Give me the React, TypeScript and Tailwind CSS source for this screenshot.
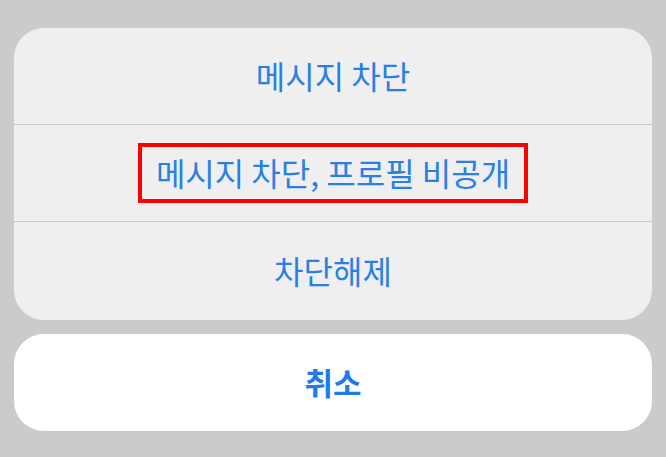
import React from "react";

const rows = ["메시지 차단", "메시지 차단, 프로필 비공개", "차단해제"];

export default function App() {
  return (
    <div
      className="w-[666px] h-[457px] bg-[#cbcbcb] px-[14px] pt-[28px] flex flex-col gap-[14px]"
      style={{ fontFamily: '"Noto Sans CJK KR", "Noto Sans", sans-serif' }}
    >
      <div className="bg-[#efefef] rounded-[30px] overflow-hidden flex flex-col">
        {rows.map((label, i) => (
          <div
            key={label}
            className={
              i < rows.length - 1
                ? "h-[97px] flex items-center justify-center border-b border-[#c9c9c9]"
                : "h-[98px] flex items-center justify-center"
            }
          >
            {i === 1 ? (
              <div className="w-[390px] h-[60px] border-[4px] border-[#ff0000] flex items-center justify-center">
                <span className="text-[32px] text-[#2a7fe3] leading-none -mt-[2px]">{label}</span>
              </div>
            ) : (
              <span className="text-[32px] text-[#2a7fe3] leading-none -mt-[2px]">{label}</span>
            )}
          </div>
        ))}
      </div>
      <div className="bg-white rounded-[30px] h-[97px] flex items-center justify-center">
        <span className="text-[31px] font-bold text-[#1f7bea] leading-none -mt-[2px]">취소</span>
      </div>
    </div>
  );
}
